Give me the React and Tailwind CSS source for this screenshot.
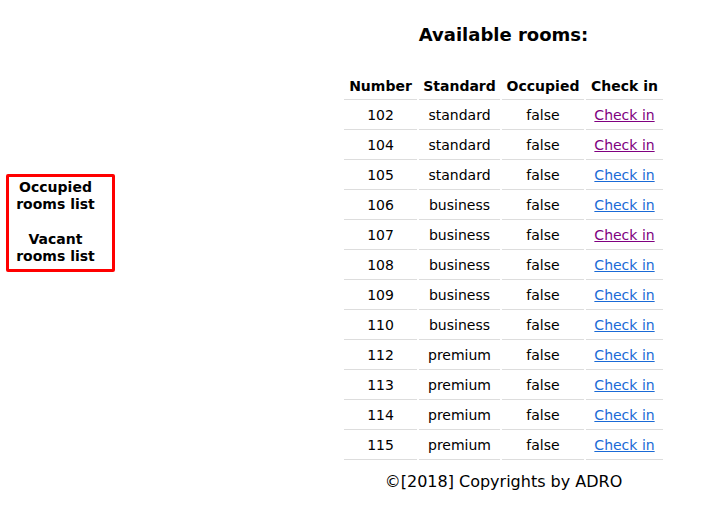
const rooms = [
  { number: 102, standard: 'standard', visited: true },
  { number: 104, standard: 'standard', visited: true },
  { number: 105, standard: 'standard' },
  { number: 106, standard: 'business' },
  { number: 107, standard: 'business', visited: true },
  { number: 108, standard: 'business' },
  { number: 109, standard: 'business' },
  { number: 110, standard: 'business' },
  { number: 112, standard: 'premium' },
  { number: 113, standard: 'premium' },
  { number: 114, standard: 'premium' },
  { number: 115, standard: 'premium' },
];

const App = () => {
  return (
    <div className="flex min-h-[529px] bg-white text-black font-['DejaVu_Sans','Liberation_Sans',sans-serif]">
      <div className="w-[342px] pl-[6px] pt-[174px]">
        <div className="w-[109px] border-[3px] border-[#ff0000] rounded-[2px] pt-[2px] pb-[4px] pr-[10px] text-center text-[14px] font-bold leading-[17px]">
          <p>Occupied<br />rooms list</p>
          <p className="mt-[18px]">Vacant<br />rooms list</p>
        </div>
      </div>

      <div className="w-[323px] flex flex-col items-center">
        <h2 className="mt-[23px] text-[18px] font-bold leading-[24px]">Available rooms:</h2>

        <table className="mt-[24px] border-separate border-spacing-[2px] text-[14px]">
          <thead>
            <tr>
              <th className="w-[73px] h-[27px] border-b border-[#dddddd] font-bold">Number</th>
              <th className="w-[81px] h-[27px] border-b border-[#dddddd] font-bold">Standard</th>
              <th className="w-[82px] h-[27px] border-b border-[#dddddd] font-bold">Occupied</th>
              <th className="w-[77px] h-[27px] border-b border-[#dddddd] font-bold">Check in</th>
            </tr>
          </thead>
          <tbody>
            {rooms.map((room) => (
              <tr key={room.number}>
                <td className="h-[28px] border-b border-[#dddddd] text-center">{room.number}</td>
                <td className="h-[28px] border-b border-[#dddddd] text-center">{room.standard}</td>
                <td className="h-[28px] border-b border-[#dddddd] text-center">false</td>
                <td className="h-[28px] border-b border-[#dddddd] text-center">
                  <a
                    href="#"
                    className={`underline ${room.visited ? 'text-[#800080]' : 'text-[#1a6ad6]'}`}
                  >
                    Check in
                  </a>
                </td>
              </tr>
            ))}
          </tbody>
        </table>

        <p className="mt-[9px] text-[16px] leading-[22px]">©[2018] Copyrights by ADRO</p>
      </div>
    </div>
  );
};

export default App;
